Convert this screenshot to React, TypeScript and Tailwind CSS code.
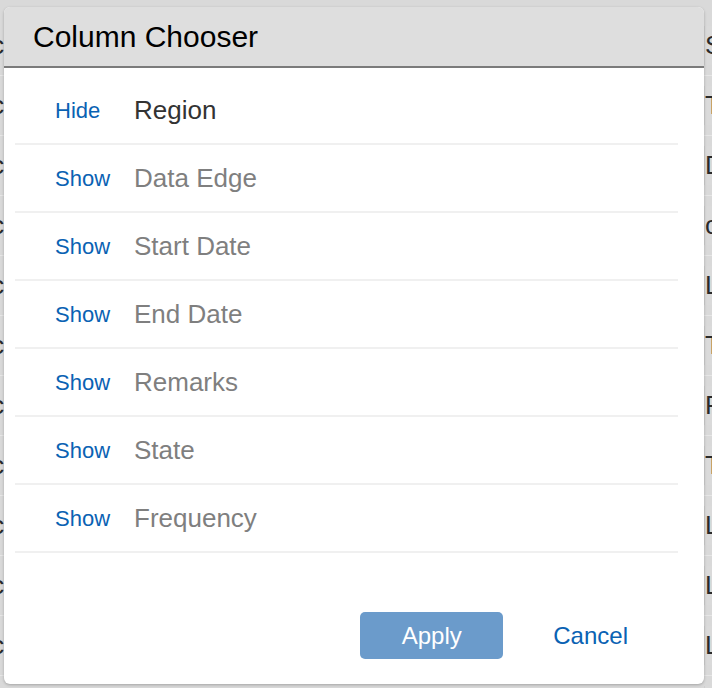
const rows = [
  { label: 'Region', visible: true },
  { label: 'Data Edge', visible: false },
  { label: 'Start Date', visible: false },
  { label: 'End Date', visible: false },
  { label: 'Remarks', visible: false },
  { label: 'State', visible: false },
  { label: 'Frequency', visible: false },
];

const bgRight = ['Sa', 'Ta', 'Do', 'co', 'Lo', 'To', 'Re', 'Ta', 'Li', 'Li', 'Li', 'Li'];

export default function App() {
  return (
    <div className="relative h-[688px] w-[712px] overflow-hidden bg-[#d9d9d9] font-['Liberation_Sans',Arial,sans-serif]">
      {/* table behind the dialog */}
      <div className="flex flex-col pt-[16px]">
        {bgRight.map((t, i) => (
          <div key={i} className="flex h-[60px] items-center border-b border-[#e6e6e6] text-[26px] text-[#2a2a2a]">
            <div className="w-[4px] overflow-hidden">
              <div className="-ml-[9px]">c</div>
            </div>
            <div className="flex-1" />
            <div className="w-[8px] overflow-hidden border-l border-[#cfcfcf] bg-[#dadada]">{t}</div>
          </div>
        ))}
      </div>

      {/* dialog */}
      <div className="absolute left-[4px] top-[7px] flex h-[677px] w-[700px] flex-col overflow-hidden rounded-[6px] bg-white shadow-[0_1px_3px_rgba(0,0,0,0.25)]">
        <div className="flex h-[61px] items-center border-b-2 border-[#7b7b7b] bg-[#dedede] pl-[29px]">
          <h1 className="text-[30px] leading-none text-black">Column Chooser</h1>
        </div>

        <div className="ml-[11px] mr-[26px] flex flex-col pt-[9px]">
          {rows.map((r) => (
            <div key={r.label} className="flex h-[68px] items-center border-b-2 border-[#f0f0f0] pl-[40px]">
              <a className="w-[79px] text-[22px] text-[#0a62b3]">{r.visible ? 'Hide' : 'Show'}</a>
              <span className={r.visible ? 'text-[26px] text-[#333333]' : 'text-[26px] text-[#7f7f7f]'}>{r.label}</span>
            </div>
          ))}
        </div>

        <div className="mt-[59px] flex items-center justify-end pr-[76px]">
          <button className="h-[47px] w-[143px] rounded-[5px] bg-[#6b9bcb] text-[24px] text-white">Apply</button>
          <button className="ml-[50px] text-[24px] text-[#0a62b3]">Cancel</button>
        </div>
      </div>
    </div>
  );
}
